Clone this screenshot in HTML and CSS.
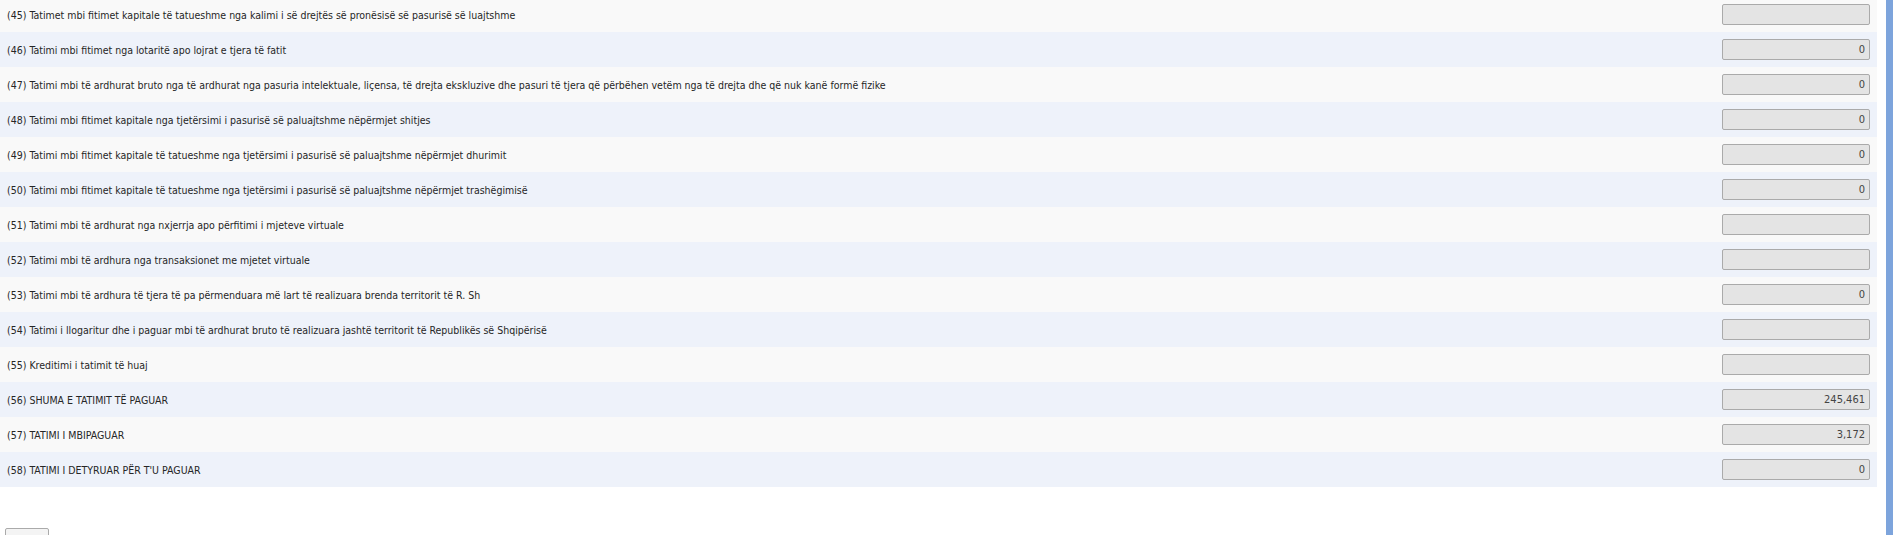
FILE: index.html
```html
<!DOCTYPE html>
<html>
<head>
<meta charset="utf-8">
<link rel="stylesheet" href="styles.css">
</head>
<body>
<div class="page">
  <div class="main">
    <div class="table">
      <div class="row odd"><span class="label">(45) Tatimet mbi fitimet kapitale të tatueshme nga kalimi i së drejtës së pronësisë së pasurisë së luajtshme</span><span class="field"></span></div>
      <div class="row even"><span class="label">(46) Tatimi mbi fitimet nga lotaritë apo lojrat e tjera të fatit</span><span class="field">0</span></div>
      <div class="row odd"><span class="label">(47) Tatimi mbi të ardhurat bruto nga të ardhurat nga pasuria intelektuale, liçensa, të drejta ekskluzive dhe pasuri të tjera që përbëhen vetëm nga të drejta dhe që nuk kanë formë fizike</span><span class="field">0</span></div>
      <div class="row even"><span class="label">(48) Tatimi mbi fitimet kapitale nga tjetërsimi i pasurisë së paluajtshme nëpërmjet shitjes</span><span class="field">0</span></div>
      <div class="row odd"><span class="label">(49) Tatimi mbi fitimet kapitale të tatueshme nga tjetërsimi i pasurisë së paluajtshme nëpërmjet dhurimit</span><span class="field">0</span></div>
      <div class="row even"><span class="label">(50) Tatimi mbi fitimet kapitale të tatueshme nga tjetërsimi i pasurisë së paluajtshme nëpërmjet trashëgimisë</span><span class="field">0</span></div>
      <div class="row odd"><span class="label">(51) Tatimi mbi të ardhurat nga nxjerrja apo përfitimi i mjeteve virtuale</span><span class="field"></span></div>
      <div class="row even"><span class="label">(52) Tatimi mbi të ardhura nga transaksionet me mjetet virtuale</span><span class="field"></span></div>
      <div class="row odd"><span class="label">(53) Tatimi mbi të ardhura të tjera të pa përmenduara më lart të realizuara brenda territorit të R. Sh</span><span class="field">0</span></div>
      <div class="row even"><span class="label">(54) Tatimi i llogaritur dhe i paguar mbi të ardhurat bruto të realizuara jashtë territorit të Republikës së Shqipërisë</span><span class="field"></span></div>
      <div class="row odd"><span class="label">(55) Kreditimi i tatimit të huaj</span><span class="field"></span></div>
      <div class="row even"><span class="label">(56) SHUMA E TATIMIT TË PAGUAR</span><span class="field">245,461</span></div>
      <div class="row odd"><span class="label">(57) TATIMI I MBIPAGUAR</span><span class="field">3,172</span></div>
      <div class="row even"><span class="label">(58) TATIMI I DETYRUAR PËR T'U PAGUAR</span><span class="field">0</span></div>
    </div>
    <div class="actions"><button class="btn" type="button"></button></div>
  </div>
  <div class="bar"></div>
</div>
</body>
</html>
```

FILE: styles.css
```css
html, body {
  margin: 0;
  padding: 0;
  background: #ffffff;
  overflow: hidden;
}
body {
  font-family: "DejaVu Sans Condensed", "DejaVu Sans", sans-serif;
  font-size: 10.5px;
  color: #262626;
}
.page {
  display: flex;
  height: 535px;
}
.main {
  width: 1877px;
  flex: none;
}
.bar {
  margin-left: 9px;
  flex: 1;
  background: #7da4dc;
}
.table {
  margin-top: -3px;
}
.row {
  display: flex;
  align-items: center;
  justify-content: space-between;
  height: 35px;
  padding: 0 7px 0 7px;
  box-sizing: border-box;
}
.odd { background: #f9f9f9; }
.even { background: #eef2fa; }
.label {
  white-space: nowrap;
}
.field {
  width: 148px;
  height: 21px;
  box-sizing: border-box;
  border: 1px solid #aaaaaa;
  border-radius: 2px;
  background: #e4e4e4;
  text-align: right;
  padding-right: 4px;
  line-height: 19px;
  color: #444444;
  font-size: 11px;
}
.actions {
  padding: 41px 0 0 5px;
}
.btn {
  width: 44px;
  height: 24px;
  border: 1px solid #aaaaaa;
  border-radius: 2px;
  background: #f4f4f4;
  padding: 0;
}
```
